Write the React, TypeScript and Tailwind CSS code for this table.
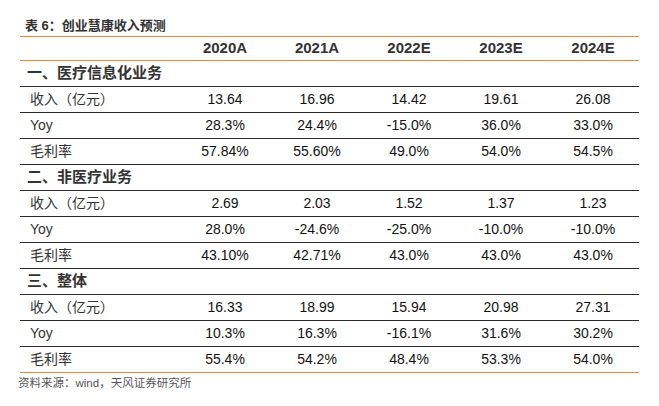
import React from "react";

type Row =
  | { kind: "section"; label: string }
  | { kind: "data"; label: string; values: string[] };

const years = ["2020A", "2021A", "2022E", "2023E", "2024E"];

const rows: Row[] = [
  { kind: "section", label: "一、医疗信息化业务" },
  { kind: "data", label: "收入（亿元）", values: ["13.64", "16.96", "14.42", "19.61", "26.08"] },
  { kind: "data", label: "Yoy", values: ["28.3%", "24.4%", "-15.0%", "36.0%", "33.0%"] },
  { kind: "data", label: "毛利率", values: ["57.84%", "55.60%", "49.0%", "54.0%", "54.5%"] },
  { kind: "section", label: "二、非医疗业务" },
  { kind: "data", label: "收入（亿元）", values: ["2.69", "2.03", "1.52", "1.37", "1.23"] },
  { kind: "data", label: "Yoy", values: ["28.0%", "-24.6%", "-25.0%", "-10.0%", "-10.0%"] },
  { kind: "data", label: "毛利率", values: ["43.10%", "42.71%", "43.0%", "43.0%", "43.0%"] },
  { kind: "section", label: "三、整体" },
  { kind: "data", label: "收入（亿元）", values: ["16.33", "18.99", "15.94", "20.98", "27.31"] },
  { kind: "data", label: "Yoy", values: ["10.3%", "16.3%", "-16.1%", "31.6%", "30.2%"] },
  { kind: "data", label: "毛利率", values: ["55.4%", "54.2%", "48.4%", "53.3%", "54.0%"] },
];

const font = { fontFamily: '"Liberation Sans", "Noto Sans CJK SC", sans-serif' };

export default function App() {
  return (
    <div className="w-[659px] h-[406px] bg-white px-5 pt-[16px]" style={font}>
      <div className="pl-[5px] h-[20px] leading-[20px] text-[13px] font-bold text-[#333]">
        表 6：创业慧康收入预测
      </div>
      <div className="w-[619px]">
        <div className="grid grid-cols-[159px_repeat(5,92px)] h-[25px] border-t border-b border-[#f0893a] items-center">
          <div />
          {years.map((y) => (
            <div key={y} className="text-center text-[15px] font-bold text-[#333]">
              {y}
            </div>
          ))}
        </div>
        {rows.map((row, i) => {
          const last = i === rows.length - 1;
          return (
            <div
              key={i}
              className={`grid grid-cols-[159px_repeat(5,92px)] h-[26px] items-center border-b ${
                last ? "border-[#f0893a]" : "border-[#2b2b2b]"
              }`}
            >
              {row.kind === "section" ? (
                <div className="pl-[7px] text-[15px] font-bold text-[#333] whitespace-nowrap">
                  {row.label}
                </div>
              ) : (
                <>
                  <div className="pl-[10px] text-[14px] text-[#333] whitespace-nowrap">{row.label}</div>
                  {row.values.map((v, j) => (
                    <div key={j} className="text-center text-[14px] text-[#111]">
                      {v}
                    </div>
                  ))}
                </>
              )}
            </div>
          );
        })}
      </div>
      <div className="-ml-[2px] mt-[1px] h-[18px] leading-[18px] text-[11.5px] text-[#555]">
        资料来源：wind，天风证券研究所
      </div>
    </div>
  );
}
